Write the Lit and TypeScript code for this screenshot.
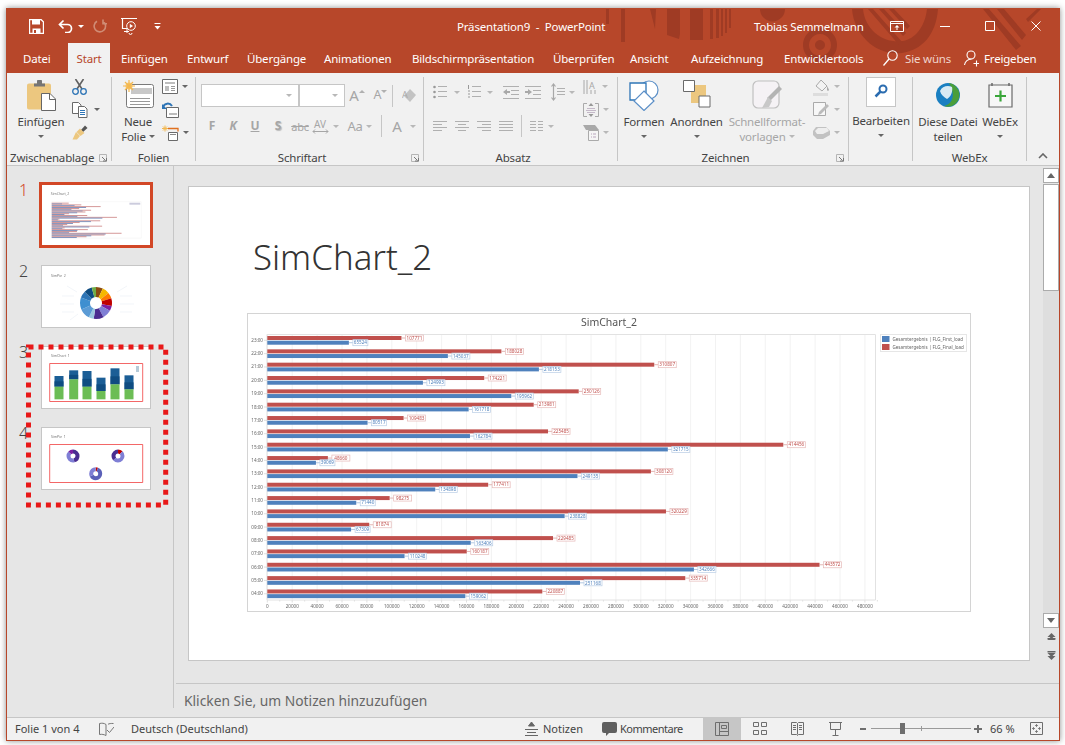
import { LitElement, html, css, svg } from "lit";
import { customElement } from "lit/decorators.js";

const TABS: [string, number, number][] = [
  ["Datei", 61, 16], ["Start", 42, 0], ["Einfügen", 66, 11], ["Entwurf", 60, 0], ["Übergänge", 77, 0],
  ["Animationen", 88, 0], ["Bildschirmpräsentation", 141, 0], ["Überprüfen", 77, 0], ["Ansicht", 61, 0],
  ["Aufzeichnung", 93, 0], ["Entwicklertools", 99, 0],
];

const ROWS: [string, number, number][] = [
  ["23:00", 107771, 65524], ["22:00", 188028, 145037], ["21:00", 310807, 218153], ["20:00", 174221, 124993],
  ["19:00", 250126, 195962], ["18:00", 213981, 161718], ["17:00", 109483, 80517], ["16:00", 225485, 162784],
  ["15:00", 414456, 321715], ["14:00", 48660, 39069], ["13:00", 308120, 249135], ["12:00", 177411, 134898],
  ["11:00", 98275, 71440], ["10:00", 320229, 238828], ["09:00", 81874, 67309], ["08:00", 229485, 163406],
  ["07:00", 160187, 110248], ["06:00", 443572, 342666], ["05:00", 335714, 251168], ["04:00", 220887, 159062],
];

const X0 = 267.3;
const K = 0.001245;

const cell = (w: number, c: unknown = "") => html`<span class="c" style="width:${w}px">${c}</span>`;
const car = html`<i class="car"></i>`;
const carD = html`<i class="car dis"></i>`;
const launcher = html`<svg class="launch" width="9" height="9" viewBox="0 0 9 9"><path d="M.5.5h7v7h-7z" fill="none" stroke="#b5b5b5"/><path d="M3 3l3.5 3.5M4 7h3.5V4" fill="none" stroke="#777"/></svg>`;

const lines = (ys: [number, number, number][], col = "#b0b0b0") =>
  svg`${ys.map(([y, a, b]) => svg`<path d="M${a} ${y}.5H${b}" stroke="${col}"/>`)}`;

const ic = (w: number, h: number, body: unknown) => html`<svg width="${w}" height="${h}" viewBox="0 0 ${w} ${h}">${body}</svg>`;

const I = {
  save: ic(15, 15, svg`<path d="M.5.5h11.5l2.5 2.5v11.5H.5z" fill="none" stroke="#fff" stroke-width="1.4"/><path d="M3 1h8v4.5H3z" fill="#fff"/><path d="M3.5 9.5h8v5h-8z" fill="#fff"/><path d="M5 11h2v3H5z" fill="#b7472a"/>`),
  undo: ic(15, 14, svg`<path d="M1.5 5.5H9.5a4 4 0 0 1 0 8H7M5.5 1.5l-4 4 4 4" fill="none" stroke="#fff" stroke-width="1.7"/>`),
  redo: ic(14, 14, svg`<path d="M4 2.2a5.7 5.7 0 1 0 6 .2M10 .5v4.2h4" fill="none" stroke="#d08c75" stroke-width="1.6"/>`),
  present: ic(17, 18, svg`<path d="M0 1.5h16M1.5 2v9.5h5" fill="none" stroke="#fff" stroke-width="1.2"/><circle cx="10" cy="9" r="4.3" fill="none" stroke="#fff"/><path d="M8.8 6.8v4.4l3.2-2.2z" fill="#fff"/><path d="M3 14.5h5M6 12v4M8 16a1.5 1.5 0 1 0 3 0" fill="none" stroke="#fff"/>`),
  qat: ic(7, 8, svg`<path d="M.5 1.5h6" stroke="#fff"/><path d="M.5 4h6L3.500 7.500z" fill="#fff"/>`),
  paste: ic(29, 31, svg`<path d="M0 5.500a2 2 0 0 1 2-2h20a2 2 0 0 1 2 2v24H2a2 2 0 0 1-2-2z" fill="#ecc77f"/><path d="M7 3.500h3V1.500a2 2 0 0 1 5 0v2h3v3H7z" fill="#757575"/><path d="M14.500 13.500h8.500l5.500 5.500v11.500h-14z" fill="#fff" stroke="#666"/><path d="M22.500 14v5.500H28" fill="none" stroke="#666"/>`),
  scissors: ic(15, 16, svg`<path d="M3.500 0l6.500 10M11.500 0L5 10" stroke="#616161" stroke-width="1.6" fill="none"/><circle cx="3.500" cy="12.500" r="2.800" fill="none" stroke="#2e75b6" stroke-width="1.300"/><circle cx="11.500" cy="12.500" r="2.800" fill="none" stroke="#2e75b6" stroke-width="1.300"/>`),
  copy: ic(16, 16, svg`<path d="M.5.500h6l2.500 2.500v8.500H.5z" fill="#fff" stroke="#6a6a6a"/><path d="M6.500 4.500h6l2.500 2.500v8.500H6.500z" fill="#fff" stroke="#6a6a6a"/>${lines([[8, 8, 13], [10, 8, 13], [12, 8, 13]], "#2e75b6")}`),
  brush: ic(16, 15, svg`<path d="M9 5l4-4.500 2.500 2.500L11 7z" fill="#555"/><path d="M8 3.500l4.500 4.500-4 3-4-4z" fill="#ecc77f"/><path d="M4 7l4 4-3 3.500H0.500z" fill="#ecc77f"/>`),
  newSlide: ic(31, 28, svg`<rect x="3.500" y="4.500" width="27" height="23" rx="2" fill="#fff" stroke="#7a7a7a"/><path d="M8 8h21v6H8z" fill="#c8c8c8"/>${lines([[18, 7, 27], [21, 7, 27], [24, 7, 27]], "#999")}<circle cx="6" cy="6" r="3.500" fill="#f7c873"/><path d="M6 0v12M0 6h12M2 2l8 8M10 2l-8 8" stroke="#f3b84f" stroke-width="1.200"/>`),
  layout: ic(16, 15, svg`<path d="M.5.500h15v14H.5z" fill="#fff" stroke="#6a6a6a"/><path d="M3 3h10v2H3zM3 7h4v5H3z" fill="#bdbdbd"/>${lines([[7, 9, 13], [9, 9, 13], [11, 9, 13]], "#999")}`),
  reset: ic(17, 16, svg`<path d="M4.500 5.500h12v10h-12z" fill="#fff" stroke="#6a6a6a"/><path d="M7 11h8v2H7z" fill="#bdbdbd"/><path d="M1 5a5 5 0 0 1 9-1" fill="none" stroke="#2e75b6" stroke-width="2"/><path d="M0 2v5h5z" fill="#2e75b6"/>`),
  section: ic(17, 16, svg`<path d="M6.500 7.500h9v8h-9z" fill="#fff" stroke="#6a6a6a"/><path d="M8 9.500h6" stroke="#888" stroke-width="1"/><path d="M6 3.500h10v3" fill="none" stroke="#e0701f" stroke-width="1.300"/><path d="M3 .5v6M0 3.500h6M1 1.500l4 4M5 1.500l-4 4" stroke="#f3b84f"/>`),
  bullets: ic(14, 14, svg`<circle cx="1.500" cy="2" r="1.300" fill="#999"/><circle cx="1.500" cy="7" r="1.300" fill="#999"/><circle cx="1.500" cy="12" r="1.300" fill="#999"/>${lines([[1, 5, 14], [6, 5, 14], [11, 5, 14]])}`),
  numbers: ic(14, 14, svg`<path d="M1.500 0v4M1 12h2M1 9h2M1 6h2" stroke="#999"/>${lines([[1, 5, 14], [6, 5, 14], [11, 5, 14]])}`),
  outdent: ic(16, 13, svg`${lines([[0, 0, 16], [4, 8, 16], [8, 8, 16], [12, 0, 16]])}<path d="M0 6l4-3v2h3v2H4v2z" fill="#a8a8a8"/>`),
  indent: ic(16, 13, svg`${lines([[0, 0, 16], [4, 8, 16], [8, 8, 16], [12, 0, 16]])}<path d="M7 6L3 3v2H0v2h3v2z" fill="#a8a8a8"/>`),
  spacing: ic(14, 18, svg`${lines([[5, 6, 14], [8, 6, 14], [11, 6, 14]])}<path d="M2.500 1v16M0.500 3.500l2-2.500 2 2.500M0.500 14.500l2 2.500 2-2.500" fill="none" stroke="#a8a8a8" stroke-width="1.200"/>`),
  textdir: ic(15, 16, svg`<path d="M1 1v14M4 1v14M8 11v4M12 11v4" stroke="#a8a8a8"/><text x="6" y="10" font-size="9" fill="#a8a8a8" font-family="Noto Sans, sans-serif">A</text>`),
  vert: ic(16, 14, svg`<path d="M4 .5H.5v13H4M12 .5h3.500v13H12" fill="none" stroke="#aaa"/>${lines([[5, 4, 12], [7, 3, 13], [9, 4, 12]], "#c4b8c8")}<path d="M8 0l2.500 3h-5zM8 14l2.500-3h-5z" fill="#999"/>`),
  smart: ic(16, 16, svg`<path d="M0 0h12l4 5H3z" fill="#a9a9a9"/><path d="M5.500 5.500h10v10h-10z" fill="#f5f5f5" stroke="#aaa"/><path d="M8 9h1M8 12h1M10 9h3M10 12h3" stroke="#b9a6bd"/>`),
  formen: ic(30, 31, svg`<circle cx="20" cy="10" r="9" fill="#fff" stroke="#5b8fc7" stroke-width="1.200"/><path d="M1 3h16v17H1z" fill="#fff" stroke="#2e75b6" stroke-width="1.300"/><path d="M15 11l10 10-10 9.500L5 21z" fill="#fff" stroke="#5b8fc7" stroke-width="1.200"/>`),
  anordnen: ic(28, 28, svg`<path d="M8 5h15v18H8z" fill="#ecc77f"/><path d="M.5.5h11v11H.5z" fill="#fff" stroke="#6a6a6a"/><path d="M16 16h11v11H16z" fill="#fff" stroke="#6a6a6a"/>`),
  quick: ic(30, 29, svg`<rect x="1" y="1" width="26" height="27" rx="5" fill="#f5f2f5" stroke="#c0c0c0" stroke-width="1.200"/><path d="M30 9L18 21l-3-3L27 6z" fill="#b4b4b4"/><path d="M16 17l4 4-3 6-7 1z" fill="#c8c8c8"/>`),
  fill: ic(17, 18, svg`<path d="M3 8l5-6 6 6-5 5z" fill="#f3f3f3" stroke="#aaa"/><path d="M14 8c1 2 2 3 2 4s-2 1-2 0z" fill="#aaa"/><path d="M0 15h15v3H0z" fill="#ddd"/>`),
  outline: ic(17, 15, svg`<path d="M.5.5h12v13H.5z" fill="#f7f7f7" stroke="#aaa"/><path d="M6 10l8-8 2 2-8 8-3 1z" fill="#bbb"/>`),
  effects: ic(17, 14, svg`<path d="M3 1h10l4 4v4l-7 4H4L0 9V5z" fill="#c2c2c2"/><path d="M2 5l3-3h9l2 3-6 3H4z" fill="#eee"/>`),
  search: ic(30, 30, svg`<rect x=".5" y=".5" width="29" height="29" fill="#fff" stroke="#c6c6c6"/><circle cx="17" cy="12" r="3.500" fill="none" stroke="#2b6cb0" stroke-width="2"/><path d="M14.500 14.500l-5 5" stroke="#2b6cb0" stroke-width="2.500"/>`),
  webex: ic(24, 24, svg`<circle cx="12" cy="12" r="12" fill="#1a7fc1"/><path d="M13 0a12 12 0 0 1 3 23 12 12 0 0 1-8 0c7-2 13-9 5-23z" fill="#4a9e3a"/><path d="M4 8c2-5 8-6 12-4 1 4-1 10-5 12-3-2-6-4-7-8z" fill="#d8eaf3"/>`),
  webexAdd: ic(25, 25, svg`<path d="M1 2h23v22H1z" fill="#f7f7f7" stroke="#6a6a6a" stroke-width="1.200"/><path d="M4 0v3M21 0v3" stroke="#6a6a6a" stroke-width="1.500"/><path d="M12.500 7.500v11M7 13h11" stroke="#3aa63a" stroke-width="2.200"/>`),
  lens: ic(15, 16, svg`<circle cx="9.500" cy="5.500" r="4.700" fill="none" stroke="#fff" stroke-width="1.100"/><path d="M6 9l-5.500 6.500" stroke="#fff" stroke-width="1.300"/>`),
  person: ic(15, 17, svg`<circle cx="7" cy="5" r="4" fill="none" stroke="#fff" stroke-width="1.100"/><path d="M.5 15a7 7 0 0 1 7-6M9.500 13.500h6M12.500 10.500v6" fill="none" stroke="#fff" stroke-width="1.100"/>`),
  ribbonMode: ic(14, 11, svg`<path d="M.5.500h13v10H.5z" fill="none" stroke="#fff"/><path d="M.5 2.500h13" stroke="#fff"/><path d="M7 4l2.500 2.500h-5zM6.500 6h1v3h-1z" fill="#fff"/>`),
  min: ic(10, 10, svg`<path d="M0 5.500h10" stroke="#fff"/>`),
  max: ic(10, 10, svg`<path d="M.5.500h9v9h-9z" fill="none" stroke="#fff"/>`),
  close: ic(10, 10, svg`<path d="M.5.500l9 9M9.500.500l-9 9" stroke="#fff"/>`),
  book: ic(15, 14, svg`<path d="M7 2.500C5 1 3 1 .5 1.500v11c2.500-.5 4.500 0 6.500 1V2.500zM9 2.300c1-.7 3-1 5.500-.8" fill="none" stroke="#777"/><path d="M8 8l2.500 2.500L15 5" fill="none" stroke="#777"/>`),
  notes: ic(13, 14, svg`<path d="M3.500 4L6.500 0l3 4zM0 7.500h13M2 10.500h9M0 13.500h13" fill="#666" stroke="#666"/>`),
  comment: ic(15, 14, svg`<path d="M2 0h11a2 2 0 0 1 2 2v7a2 2 0 0 1-2 2H7l-3 3v-3H2a2 2 0 0 1-2-2V2a2 2 0 0 1 2-2z" fill="#5f5f5f"/>`),
  vNormal: ic(14, 14, svg`<path d="M.5.500h13v13H.5zM4.500.5v13M4.500 9.500h9M6.500 3.500h5v3h-5z" fill="none" stroke="#6e6e6e"/>`),
  vSort: ic(14, 13, svg`<path d="M.5.500h5v4h-5zM8.500.500h5v4h-5zM.5 8.500h5v4h-5zM8.500 8.500h5v4h-5z" fill="none" stroke="#6e6e6e"/>`),
  vRead: ic(13, 14, svg`<path d="M.5.500h5l1 1 1-1h5v12h-5l-1 1-1-1h-5zM6.500 1.500v11M2 3.500h3M2 5.500h3M2 7.500h3M8 3.500h3M8 5.500h3M8 7.500h3" fill="none" stroke="#6e6e6e"/>`),
  vShow: ic(13, 14, svg`<path d="M0 .5h13M1.500 1v6.500h10V1M6.500 8v5M3.500 13.500h6" fill="none" stroke="#6e6e6e"/>`),
  fit: ic(13, 13, svg`<path d="M.5.500h12v12H.5z" fill="none" stroke="#6e6e6e"/><path d="M6.500 2v3M5 3.500h3M6.500 8v3M5 9.500h3M2 6.500h3M3.500 5v3M8 6.500h3M9.500 5v3" stroke="#6e6e6e" stroke-width=".8"/>`),
};

const alignIcon = (rows: [number, number, number][]) => ic(14, 11, svg`${lines(rows)}`);
const ALIGN = [
  alignIcon([[0, 0, 14], [3, 0, 9], [6, 0, 14], [9, 0, 9]]),
  alignIcon([[0, 0, 14], [3, 3, 11], [6, 0, 14], [9, 3, 11]]),
  alignIcon([[0, 0, 14], [3, 5, 14], [6, 0, 14], [9, 5, 14]]),
  alignIcon([[0, 0, 14], [3, 0, 14], [6, 0, 14], [9, 0, 14]]),
];

const fmtAxis = () => {
  const out: unknown[] = [];
  for (let v = 0; v <= 480000; v += 20000) {
    const x = X0 + v * K;
    out.push(svg`<path d="M${x} 334V600" stroke="#efefef" stroke-width=".8"/><path d="M${x} 600v2.500M${x + 12.45} 600v1.500" stroke="#c9c9c9" stroke-width=".6"/><text class="ax" x="${x}" y="608" text-anchor="middle">${v}</text>`);
  }
  return out;
};

const bars = () =>
  ROWS.map(([h, r, b], i) => {
    const ry = 338 + i * 13.34;
    const by = 342.7 + i * 13.34;
    const rx = X0 + r * K;
    const bx = X0 + b * K;
    return svg`
      <text class="ax" x="263" y="${ry + 3.800}" text-anchor="end">${h}</text>
      <path d="M264 ${ry + 2.300}h3" stroke="#c9c9c9" stroke-width=".6"/>
      <rect x="${X0}" y="${ry - 2}" width="${rx - X0}" height="4" fill="#c0504d"/>
      <rect x="${X0}" y="${by - 2}" width="${bx - X0}" height="4" fill="#4f81bd"/>
      <path d="M${rx} ${ry}h4" stroke="#d99694" stroke-width=".7"/>
      <rect x="${rx + 4}" y="${ry - 3}" width="18" height="6" fill="#fff" stroke="#e6b9b8" stroke-width=".7"/>
      <text class="val" x="${rx + 13}" y="${ry + 1.700}" text-anchor="middle" fill="#c0504d">${r}</text>
      <path d="M${bx} ${by}h4" stroke="#95b3d7" stroke-width=".7"/>
      <rect x="${bx + 4}" y="${by - 3}" width="${String(b).length > 5 ? 18 : 15}" height="6" fill="#fff" stroke="#b9cde5" stroke-width=".7"/>
      <text class="val" x="${bx + (String(b).length > 5 ? 13 : 11.500)}" y="${by + 1.700}" text-anchor="middle" fill="#4f81bd">${b}</text>`;
  });

const donut = (cx: number, cy: number, r: number, w: number, segs: [string, number][]) => {
  const c = 2 * Math.PI * r;
  let off = 0;
  return segs.map(([col, f]) => {
    const s = svg`<circle cx="${cx}" cy="${cy}" r="${r}" fill="none" stroke="${col}" stroke-width="${w}" stroke-dasharray="${f * c} ${c}" stroke-dashoffset="${-off * c}" transform="rotate(-90 ${cx} ${cy})"/>`;
    off += f;
    return s;
  });
};

const thumb1 = svg`
  <text class="tt" x="8" y="10">SimChart_2</text>
  <path d="M9 17h91v37H9z" fill="none" stroke="#f1f1f1" stroke-width=".5"/>
  ${ROWS.map(([_, r, b], i) => svg`
    <rect x="9" y="${18 + i * 1.800}" width="${r * 0.00016}" height=".85" fill="#cd8585"/>
    <rect x="9" y="${18.850 + i * 1.800}" width="${b * 0.00016}" height=".85" fill="#6f84b5"/>`)}
  <rect x="88" y="18" width="11" height="2" fill="#ccd"/>`;

const thumb2 = svg`
  <text class="tt" x="9" y="11">SimPie_2</text>
  ${donut(54, 37, 11, 10, [["#8a4b12", .07], ["#f5b800", .07], ["#ff7a00", .06], ["#c00000", .08], ["#7b1fa2", .05], ["#7f7fd5", .09], ["#4a2d91", .1], ["#9ac8e0", .05], ["#5b9bd5", .11], ["#3f8fd0", .12], ["#2e75b6", .07], ["#0f4c81", .08], ["#70ad47", .05]])}
  <path d="M25 20l10 6M20 30h12M18 38h14M20 46h12M28 54l8-6M85 20l-10 6M90 30h-12M92 38H78M90 46H78" stroke="#edf1f6" stroke-width=".7"/>`;

const C3: [number, number, number][] = [[17, 620, 652], [31.700, 603, 630], [45, 605, 652], [59, 625, 665], [73, 597, 645], [87, 618, 660]];
const thumb3 = svg`
  <text class="tt" x="9" y="10">SimChart_1</text>
  ${C3.map(([x, t, m]) => svg`
    <rect x="${x - 4.500}" y="${(t - 533) / 3}" width="9" height="${(m - t) / 3}" fill="#1b5e96"/>
    <rect x="${x - 4.500}" y="${(t - 533) / 3 + (m - t) / 6}" width="9" height="${(m - t) / 6}" fill="#0f4c81"/>
    <rect x="${x - 4.500}" y="${(m - 533) / 3}" width="9" height="${(690 - m) / 3}" fill="#6cbd55"/>`)}
  <rect x="94" y="19" width="3" height="6" fill="#b7cbd8"/>
  <path d="M7.700 16.500h93V54.500h-93z" fill="none" stroke="#f04040" stroke-width=".8"/>`;

const pie = [["#4a2d91", .45], ["#7f7fd5", .4], ["#7b1fa2", .15]] as [string, number][];
const thumb4 = svg`
  <text class="tt" x="9" y="10">SimPie_1</text>
  ${donut(31, 28, 4.500, 4, pie)}
  ${donut(76, 28, 4.500, 4, [["#c00000", .12], ["#7f7fd5", .5], ["#4a2d91", .38]])}
  ${donut(53.700, 45.700, 4.500, 4, [["#c00000", .06], ["#5b60b8", .6], ["#7f7fd5", .34]])}
  <path d="M7.700 16.500h93V54.500h-93z" fill="none" stroke="#f04040" stroke-width=".8"/>`;

@customElement("app-root")
export class AppRoot extends LitElement {
  static styles = css`
    :host { display: block; width: 1065px; height: 745px; background: #fff; font-family: "Noto Sans", "Open Sans", sans-serif; font-size: 11.500px; letter-spacing: -.18px; color: #444; overflow: hidden; }
    * { box-sizing: border-box; }
    svg { display: block; flex: none; }
    svg text { letter-spacing: 0; }
    .win { margin: 8px 5px 0 6px; height: 733px; border: 1px solid #b7472a; box-shadow: 0 0 6px rgba(0,0,0,.45); display: flex; flex-direction: column; background: #e6e6e6; }
    .head { height: 64px; background: #b7472a; position: relative; color: #fff; flex: none; }
    .art { position: absolute; left: 0; top: 0; }
    .title { position: relative; height: 34px; display: flex; align-items: center; }
    .qa { display: flex; align-items: center; width: 450px; padding-left: 13px; flex: none; height: 100%; }
    .doc { width: 297px; white-space: pre; flex: none; }
    .user { width: 117.500px; white-space: nowrap; flex: none; }
    .wbtn { display: flex; align-items: center; flex: none; height: 100%; }
    .tabs { position: relative; height: 30px; display: flex; align-items: stretch; }
    .tab { display: flex; align-items: center; white-space: nowrap; flex: none; padding-left: 11px; }
    .tab.on { background: #f1f1f1; color: #b7472a; justify-content: center; padding-left: 0; }
    .tab.first { padding-left: 16px; }
    .tellme { display: flex; align-items: center; margin-left: 11px; white-space: nowrap; }
    .dim { color: #f0d4cb; margin-left: 7px; width: 57px; }
    .share { margin-left: 4px; }
    .ribbon { height: 93px; background: #f1f1f1; border-bottom: 1px solid #c6c6c6; display: flex; flex: none; padding-top: 4px; }
    .grp { height: 84px; border-right: 1px solid #c6c6c6; display: flex; flex-direction: column; flex: none; position: relative; }
    .body { height: 74.500px; display: flex; flex: none; }
    .lab { height: 12px; line-height: 12px; text-align: center; white-space: nowrap; color: #444; position: relative; }
    .lab.left { text-align: left; padding-left: 3px; }
    .lab.off { padding-right: 15px; }
    .launch { position: absolute; right: 3px; top: 2px; }
    .big { display: flex; flex-direction: column; align-items: center; flex: none; }
    .ico { height: 37px; padding-top: 3px; display: flex; justify-content: center; }
    .ico.top0 { height: 36px; padding-top: 0; }
    .ico.low { padding-top: 6px; }
    .ln { height: 15px; line-height: 15px; white-space: nowrap; display: flex; align-items: center; gap: 3px; }
    .dis { color: #a6a6a6; }
    .car { display: block; width: 0; height: 0; border-left: 3px solid transparent; border-right: 3px solid transparent; border-top: 3px solid #666; flex: none; }
    .car.dis { border-top-color: #b8b8b8; }
    .car.white { border-top-color: #fff; }
    .col { display: flex; flex-direction: column; margin-top: -2px; }
    .col.m2 { margin-left: 2px; }
    .col.m6 { margin-left: 6px; }
    .col.mn { margin-left: -3px; }
    .sm { height: 23px; display: flex; align-items: center; gap: 6px; }
    .sm.g4 { gap: 4px; }
    .row { display: flex; align-items: center; flex: none; }
    .c { display: flex; align-items: center; justify-content: center; flex: none; height: 100%; }
    .r1 { height: 23px; margin-top: 7px; }
    .r2 { height: 20px; margin-top: 9px; }
    .combo { height: 23px; background: #fff; border: 1px solid #c6c6c6; display: flex; align-items: center; justify-content: flex-end; padding-right: 6px; flex: none; }
    .vs { width: 1px; height: 22px; background: #c6c6c6; flex: none; }
    .gl { color: #a6a6a6; font-size: 13px; line-height: 1; }
    .gl.b { font-weight: 700; font-size: 12px; }
    .gl.i { font-style: italic; font-weight: 700; font-size: 12px; }
    .gl.u { text-decoration: underline; font-weight: 700; font-size: 12px; }
    .gl.s { font-weight: 700; text-shadow: 1px 1px 1px #bbb; font-size: 12px; }
    .gl.st { text-decoration: line-through; font-size: 11px; }
    .gl.l { font-size: 15px; }
    .gl.m { font-size: 12.500px; }
    .mark { margin-top: -8px; }
    .lcol { display: flex; flex-direction: column; width: 153px; flex: none; }
    .l1 { height: 20px; margin-top: 5px; }
    .l2 { height: 20px; margin-top: 14px; }
    .endc { flex: 1; display: flex; justify-content: center; align-items: flex-end; padding-bottom: 6px; }
    .content { flex: 1; display: flex; min-height: 0; }
    .side { width: 167px; flex: none; border-right: 1px solid #c6c6c6; padding-top: 16px; position: relative; display: flex; flex-direction: column; gap: 18px; margin-bottom: 9px; }
    .trow { display: flex; height: 63px; padding-left: 12px; }
    .trow.sel { height: 66px; margin-bottom: -1px; }
    .num { width: 22px; font-size: 16px; line-height: 16px; color: #444; flex: none; margin-top: -2px; font-weight: 300; }
    .sel .num { color: #d24726; margin-top: 0; }
    .th { width: 110px; height: 63px; background: #fff; border: 1px solid #c6c6c6; }
    .th svg { filter: blur(.3px); }
    .sel .th { width: 114px; height: 66px; border: 3px solid #d24726; margin-left: -2px; }
    .tt { font-size: 3.500px; fill: #777; font-family: "Noto Sans", sans-serif; }
    .dots { position: absolute; left: 19px; top: 177px; }
    .main { flex: 1; display: flex; flex-direction: column; min-width: 0; }
    .stage { height: 518px; flex: none; display: flex; padding: 20px 0 0 12px; border-bottom: 1px solid #c6c6c6; margin-left: 2px; }
    .slide { width: 842px; height: 475px; background: #fff; border: 1px solid #c6c6c6; flex: none; padding: 0 0 0 58px; }
    .stitle { font-weight: 300; font-size: 34.800px; letter-spacing: 0; line-height: 44px; color: #333; margin: 48px 0 0 6px; height: 78px; }
    .chart { filter: blur(.3px); }
    .ax { font-size: 4.600px; fill: #666; font-family: "Noto Sans", sans-serif; }
    .val { font-size: 4.600px; font-family: "Noto Sans", sans-serif; }
    .ct { font-size: 10.500px; fill: #555; font-family: "Noto Sans", sans-serif; }
    .lg { font-size: 4.550px; fill: #666; font-family: "Noto Sans", sans-serif; }
    .scroll { width: 16px; flex: none; margin-left: 13px; margin-top: -18px; display: flex; flex-direction: column; height: 496px; align-items: stretch; }
    .sb { height: 15px; background: #fff; border: 1px solid #ababab; display: flex; align-items: center; justify-content: center; flex: none; }
    .thumbbar { height: 107px; margin-top: 1px; background: #fff; border: 1px solid #ababab; flex: none; }
    .track { flex: 1; background: #dedede; }
    .nav { flex: none; height: 36px; display: flex; flex-direction: column; align-items: center; gap: 9px; padding-top: 5px; }
    .tri-u { border-left: 4px solid transparent; border-right: 4px solid transparent; border-bottom: 5px solid #666; width: 0; height: 0; }
    .tri-d { border-left: 4px solid transparent; border-right: 4px solid transparent; border-top: 5px solid #666; width: 0; height: 0; }
    .notes { flex: 1; padding: 7px 0 0 10px; font-size: 13.800px; letter-spacing: 0; color: #666; line-height: 20px; white-space: nowrap; }
    .status { height: 23px; flex: none; background: #f1f1f1; border-top: 1px solid #c6c6c6; display: flex; align-items: center; font-size: 11px; letter-spacing: 0; color: #444; padding-bottom: 1px; }
    .status > * { flex: none; }
    .s1 { margin-left: 8px; width: 84px; }
    .s2 { margin-left: 17px; width: 394px; }
    .s3 { margin-left: 5px; width: 59px; }
    .s4 { margin-left: 3px; width: 83px; letter-spacing: -.5px; }
    .s5 { margin-left: 6px; width: 40px; }
    .zminus { display: block; width: 6px; height: 2px; background: #6e6e6e; }
    .zoomtr { width: 100px; height: 1px; background: #9a9a9a; position: relative; display: block; }
    .thumbz { position: absolute; left: 29px; top: -5px; width: 5px; height: 11px; background: #6e6e6e; }
    .tickz { position: absolute; left: 50px; top: -2px; width: 1px; height: 5px; background: #9a9a9a; }
    .high { background: #c6c6c6; height: 22px; width: 38px; display: flex; align-items: center; justify-content: center; }
  `;

  render() {
    return html`<div class="win">
      <div class="head">
        <svg class="art" width="1053" height="64" viewBox="7 9 1053 64">
          <g fill="#9f3b24">
            <path d="M606 9h3v15h-3zM621 9h4v33h-4zM650 9h6l-1 20zM667 9h13v25l-1 5-12-4zM690 9h13v31h-13z"/>
            <path d="M710 9h3v30h-3zM716 9h3v29h-3zM721 9h2v27h-2zM725 9h2v24h-2zM729 9h2v19h-2z"/>
            <path d="M760 9h25a12 12 0 0 1-25 0z"/>
            <path fill-rule="evenodd" d="M820 28a17 17 0 1 1-.01 0zM820 34a11 11 0 1 0 .01 0zM820 40a5 5 0 1 1-.01 0z"/>
            <path d="M852 9h11c2 22 22 35 40 32 12-2 22-14 24-32h11c-2 26-16 41-36 44-26 3-48-18-50-44z"/>
            <path d="M868 9h5l30 34-4 2zM879 9h5l22 24-3 3zM889 9h5l16 17-3 3z"/>
            <path d="M983 9h6l32 37-5 4zM997 9h7l22 26-4 5zM1037 9h4l-13 13-2-3z"/>
          </g>
        </svg>
        <div class="title">
          <div class="qa">
            ${cell(32, I.save)}${cell(26, I.undo)}${cell(6, html`<i class="car white"></i>`)}
            ${cell(32, I.redo)}${cell(27, I.present)}${cell(28, I.qat)}
          </div>
          <div class="doc">Präsentation9  -  PowerPoint</div>
          <div class="user">Tobias Semmelmann</div>
          <div class="wbtn">
            ${cell(51, I.ribbonMode)}${cell(45, I.min)}${cell(45, I.max)}${cell(46, I.close)}
          </div>
        </div>
        <div class="tabs">
          ${TABS.map(([t, w], i) => html`<div class="tab ${t === "Start" ? "on" : ""} ${i === 0 ? "first" : ""}" style="width:${w}px">${t}</div>`)}
          <div class="tellme">${cell(15, I.lens)}<span class="dim">Sie wüns</span>${cell(18, I.person)}<span class="share">Freigeben</span></div>
        </div>
      </div>

      <div class="ribbon">
        <div class="grp" style="width:105px">
          <div class="body">
            <div class="big" style="width:68px"><div class="ico">${I.paste}</div><div class="ln">Einfügen</div><div class="ln">${car}</div></div>
            <div class="col mn">
              <div class="sm">${I.scissors}</div>
              <div class="sm">${I.copy}${car}</div>
              <div class="sm">${I.brush}</div>
            </div>
          </div>
          <div class="lab left">Zwischenablage${launcher}</div>
        </div>
        <div class="grp" style="width:84px">
          <div class="body">
            <div class="big" style="width:48px;margin-left:2px"><div class="ico">${I.newSlide}</div><div class="ln">Neue</div><div class="ln">Folie ${car}</div></div>
            <div class="col">
              <div class="sm g4">${I.layout}${car}</div>
              <div class="sm g4">${I.reset}</div>
              <div class="sm g4">${I.section}${car}</div>
            </div>
          </div>
          <div class="lab">Folien</div>
        </div>
        <div class="grp" style="width:228px">
          <div class="body" style="flex-direction:column;padding-left:5px">
            <div class="row r1">
              <div class="combo" style="width:98px">${carD}</div><div class="combo" style="width:46px">${carD}</div>
              ${cell(24, html`<span class="gl l">A</span><svg class="mark" width="6" height="6"><path d="M0 4l3-3 3 3z" fill="#b0b0b0"/></svg>`)}
              ${cell(23, html`<span class="gl m">A</span><svg class="mark" width="6" height="6"><path d="M0 1l3 3 3-3z" fill="#b0b0b0"/></svg>`)}
              <div class="vs"></div>
              ${cell(33, ic(15, 15, svg`<path d="M8 1l6 6-6 7-6-6z" fill="#c3c3c3"/><text x="0" y="10" font-size="9" fill="#aaa" font-family="Noto Sans, sans-serif">A</text>`))}
            </div>
            <div class="row r2">
              ${cell(22, html`<span class="gl b">F</span>`)}${cell(20, html`<span class="gl i">K</span>`)}${cell(24, html`<span class="gl u">U</span>`)}
              ${cell(22, html`<span class="gl s">S</span>`)}${cell(22, html`<span class="gl st">abc</span>`)}
              ${cell(20, ic(18, 18, svg`<text x="2" y="11" font-size="10" fill="#a6a6a6" font-family="Noto Sans, sans-serif">AV</text><path d="M1 14.500h15M3 12.500l-2 2 2 2M14 12.500l2 2-2 2" fill="none" stroke="#a6a6a6"/>`))}
              ${cell(10, carD)}${cell(3)}${cell(22, html`<span class="gl">Aa</span>`)}${cell(6, carD)}${cell(9)}
              <div class="vs"></div>${cell(3)}${cell(24, html`<span class="gl l">A</span>`)}${cell(8, carD)}
            </div>
          </div>
          <div class="lab off">Schriftart${launcher}</div>
        </div>
        <div class="grp" style="width:194px">
          <div class="body">
            <div class="lcol">
              <div class="row l1">
                ${cell(9)}${cell(14, I.bullets)}${cell(5)}${cell(10, carD)}${cell(5)}${cell(14, I.numbers)}${cell(4)}${cell(10, carD)}${cell(8)}
                ${cell(16, I.outdent)}${cell(6)}${cell(16, I.indent)}${cell(10)}${cell(14, I.spacing)}${cell(2)}${cell(10, carD)}
              </div>
              <div class="row l2">
                ${ALIGN.map((a, i) => html`${cell(i === 0 ? 9 : 8)}${a}`)}
                ${cell(8)}<div class="vs"></div>${cell(8)}${ic(13, 11, svg`${lines([[0, 0, 6], [3, 0, 6], [6, 0, 6], [9, 0, 6], [0, 8, 13], [3, 8, 13], [6, 8, 13], [9, 8, 13]])}`)}${cell(3)}${cell(10, carD)}
              </div>
            </div>
            <div class="col m6">
              <div class="sm g4">${I.textdir}${carD}</div>
              <div class="sm g4">${I.vert}${carD}</div>
              <div class="sm g4">${I.smart}${carD}</div>
            </div>
          </div>
          <div class="lab off">Absatz</div>
        </div>
        <div class="grp" style="width:231px">
          <div class="body">
            <div class="big" style="width:52px"><div class="ico">${I.formen}</div><div class="ln">Formen</div><div class="ln">${car}</div></div>
            <div class="big" style="width:53px"><div class="ico">${I.anordnen}</div><div class="ln">Anordnen</div><div class="ln">${car}</div></div>
            <div class="big dis" style="width:88px"><div class="ico">${I.quick}</div><div class="ln">Schnellformat-</div><div class="ln">vorlagen ${carD}</div></div>
            <div class="col m2">
              <div class="sm g4">${I.fill}${carD}</div>
              <div class="sm g4">${I.outline}${carD}</div>
              <div class="sm g4">${I.effects}${carD}</div>
            </div>
          </div>
          <div class="lab off">Zeichnen${launcher}</div>
        </div>
        <div class="grp" style="width:64px">
          <div class="body">
            <div class="big" style="width:64px"><div class="ico top0">${I.search}</div><div class="ln">Bearbeiten</div><div class="ln">${car}</div></div>
          </div>
        </div>
        <div class="grp" style="width:114px">
          <div class="body">
            <div class="big" style="width:70px"><div class="ico low">${I.webex}</div><div class="ln">Diese Datei</div><div class="ln">teilen</div></div>
            <div class="big" style="width:34px"><div class="ico low">${I.webexAdd}</div><div class="ln">WebEx</div><div class="ln">${car}</div></div>
          </div>
          <div class="lab">WebEx</div>
        </div>
        <div class="endc">${ic(10, 6, svg`<path d="M1 5l4-4 4 4" fill="none" stroke="#666" stroke-width="1.600"/>`)}</div>
      </div>

      <div class="content">
        <div class="side">
          ${[thumb1, thumb2, thumb3, thumb4].map((t, i) => html`<div class="trow ${i === 0 ? "sel" : ""}">
            <div class="num">${i + 1}</div>
            <div class="th"><svg width="108" height="${i === 0 ? 60 : 61}" viewBox="0 0 108 61">${t}</svg></div>
          </div>`)}
          <svg class="dots" width="152" height="166" viewBox="26 343 152 166">
            <path d="M28.500 347H165.700V505H28.500z" fill="none" stroke="#e81818" stroke-width="5" stroke-dasharray="5 5"/>
          </svg>
        </div>
        <div class="main">
          <div class="stage">
            <div class="slide">
              <div class="stitle">SimChart_2</div>
              <svg class="chart" width="724" height="299" viewBox="247 313 724 299">
                <rect x="247.500" y="313.500" width="723" height="298" fill="#fff" stroke="#d4d4d4"/>
                <text class="ct" x="609" y="326" text-anchor="middle">SimChart_2</text>
                ${fmtAxis()}
                <path d="M267 334.500H875.500V600H267z" fill="none" stroke="#e2e2e2" stroke-width="1"/>
                ${bars()}
                <rect x="880.500" y="334.500" width="86" height="17" fill="#fff" stroke="#e6e6e6"/>
                <rect x="882" y="336" width="7.500" height="6" fill="#4f81bd"/>
                <rect x="882" y="344" width="7.500" height="6" fill="#c0504d"/>
                <text class="lg" x="892.500" y="341">Gesamtergebnis | FLG_First_load</text>
                <text class="lg" x="892.500" y="349">Gesamtergebnis | FLG_Final_load</text>
              </svg>
            </div>
            <div class="scroll">
              <div class="sb"><div class="tri-u"></div></div>
              <div class="thumbbar"></div>
              <div class="track"></div>
              <div class="sb"><div class="tri-d"></div></div>
              <div class="nav">
                <div>${ic(9, 9, svg`<path d="M4.500 0l4 4H.5zM.5 5h8v1.500h-8z" fill="#666"/><path d="M4.500 3l4 4H.5z" fill="#666"/>`)}</div>
                <div>${ic(9, 9, svg`<path d="M.5 0h8v1.500h-8zM.5 2h8l-4 4zM.5 5h8l-4 4z" fill="#666"/>`)}</div>
              </div>
            </div>
          </div>
          <div class="notes">Klicken Sie, um Notizen hinzuzufügen</div>
        </div>
      </div>

      <div class="status">
        <span class="s1">Folie 1 von 4</span>
        ${I.book}
        <span class="s2">Deutsch (Deutschland)</span>
        ${I.notes}
        <span class="s3">Notizen</span>
        ${I.comment}
        <span class="s4">Kommentare</span>
        <div class="high">${I.vNormal}</div>
        ${cell(38, I.vSort)}${cell(37, I.vRead)}${cell(39, I.vShow)}
        ${cell(16, html`<span class="zminus"></span>`)}
        <span class="zoomtr"><span class="thumbz"></span><span class="tickz"></span></span>
        ${cell(13, ic(8, 8, svg`<path d="M0 3h8v2H0zM3 0h2v8H3z" fill="#6e6e6e"/>`))}
        <span class="s5">66 %</span>
        ${I.fit}
      </div>
    </div>`;
  }
}
